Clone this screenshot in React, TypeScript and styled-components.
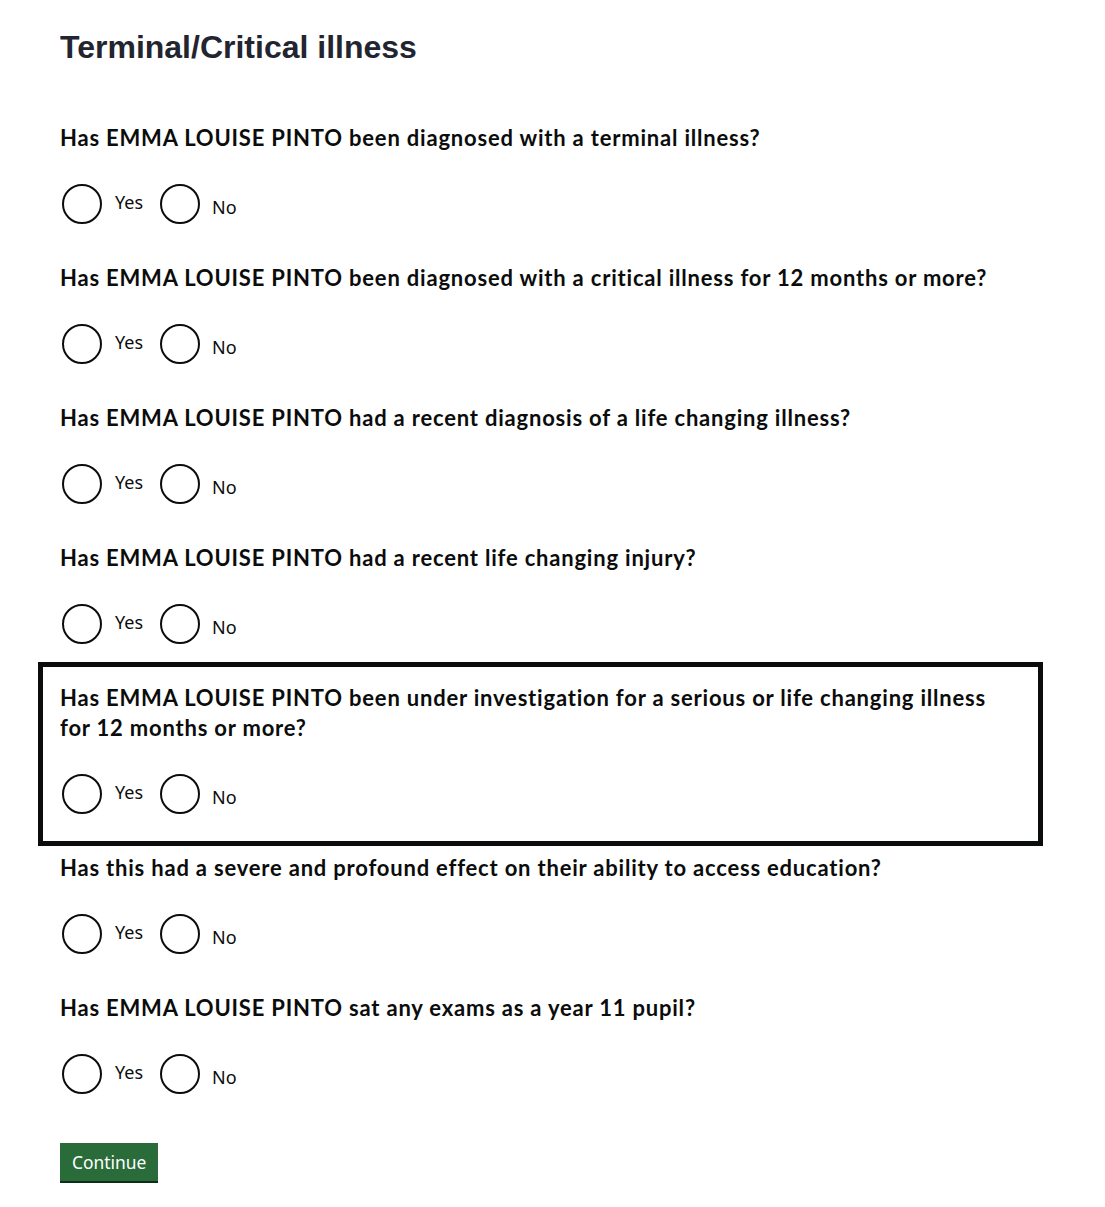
import React from "react";
import styled, { createGlobalStyle } from "styled-components";

const GlobalStyle = createGlobalStyle`
  html, body { margin: 0; padding: 0; background: #ffffff; }
  body { font-family: "Lato", "Liberation Sans", sans-serif; color: #0b0c0c; }
`;

const Page = styled.main`
  width: 961px;
  padding: 27px 84px 40px 60px;
  display: flex;
  flex-direction: column;
`;

const Title = styled.h1`
  margin: 0 0 56px;
  font-family: "Liberation Sans", Arial, sans-serif;
  font-weight: 700;
  font-size: 32px;
  line-height: 40px;
  color: #22252f;
`;

const Questions = styled.div`
  display: flex;
  flex-direction: column;
  gap: 39px;
`;

const Group = styled.fieldset<{ $highlight?: boolean }>`
  margin: 0;
  padding: 0;
  border: none;
  min-width: 0;
  display: flex;
  flex-direction: column;
  gap: 31px;
  ${(p) =>
    p.$highlight &&
    `
    border: 5px solid #0b0c0c;
    padding: 16px 17px 27px;
    margin: -21px -22px -32px;
  `}
`;

const Legend = styled.div`
  font-family: "Lato", "Liberation Sans", sans-serif;
  font-weight: 700;
  font-size: 22px;
  letter-spacing: 0.8px;
  line-height: 30px;
  color: #0b0c0c;
`;

const Options = styled.div`
  display: flex;
  align-items: flex-start;
  padding-left: 2px;
`;

const Option = styled.label`
  display: flex;
  align-items: flex-start;
  cursor: pointer;
`;

const Circle = styled.span`
  box-sizing: border-box;
  width: 40px;
  height: 40px;
  border: 2px solid #0b0c0c;
  border-radius: 50%;
  flex: none;
`;

const OptionText = styled.span<{ $top: number; $right: number; $left: number }>`
  font-family: "Noto Sans", "Liberation Sans", sans-serif;
  font-size: 18px;
  line-height: 25px;
  color: #0b0c0c;
  padding: ${(p) => `${p.$top}px ${p.$right}px 0 ${p.$left}px`};
`;

const Button = styled.button`
  align-self: flex-start;
  margin-top: 49px;
  padding: 7px 12px 6px;
  border: none;
  border-radius: 0;
  background: #296c3a;
  box-shadow: 0 2px 0 #0d2e17;
  color: #ffffff;
  font-family: "Noto Sans", "Liberation Sans", sans-serif;
  font-size: 17.4px;
  line-height: 25px;
  cursor: pointer;
`;

const questions: { text: string; highlight?: boolean }[] = [
  { text: "Has EMMA LOUISE PINTO been diagnosed with a terminal illness?" },
  { text: "Has EMMA LOUISE PINTO been diagnosed with a critical illness for 12 months or more?" },
  { text: "Has EMMA LOUISE PINTO had a recent diagnosis of a life changing illness?" },
  { text: "Has EMMA LOUISE PINTO had a recent life changing injury?" },
  {
    text: "Has EMMA LOUISE PINTO been under investigation for a serious or life changing illness for 12 months or more?",
    highlight: true,
  },
  { text: "Has this had a severe and profound effect on their ability to access education?" },
  { text: "Has EMMA LOUISE PINTO sat any exams as a year 11 pupil?" },
];

export default function App() {
  return (
    <>
      <GlobalStyle />
      <Page>
        <Title>Terminal/Critical illness</Title>
        <Questions>
          {questions.map((q, i) => (
            <Group key={i} $highlight={q.highlight}>
              <Legend>{q.text}</Legend>
              <Options>
                <Option>
                  <Circle />
                  <OptionText $top={6} $right={17} $left={13}>Yes</OptionText>
                </Option>
                <Option>
                  <Circle />
                  <OptionText $top={11} $right={0} $left={12}>No</OptionText>
                </Option>
              </Options>
            </Group>
          ))}
        </Questions>
        <Button type="button">Continue</Button>
      </Page>
    </>
  );
}
